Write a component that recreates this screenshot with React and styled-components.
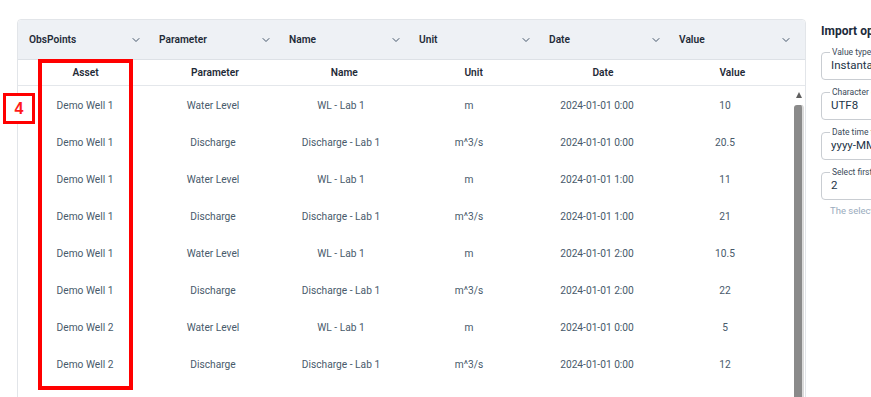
import React from "react";
import styled, { createGlobalStyle } from "styled-components";
import { ChevronDown } from "lucide-react";

const GlobalStyle = createGlobalStyle`
  html, body {
    margin: 0;
    padding: 0;
    overflow: hidden;
    background: #ffffff;
  }
  body {
    font-family: Roboto, "Liberation Sans", sans-serif;
  }
`;

const Page = styled.div`
  position: relative;
  display: flex;
  align-items: flex-start;
  gap: 15px;
  padding: 19px 0 0 17px;
  width: 1100px;
`;

const TableCard = styled.div`
  width: 787px;
  flex: none;
  border: 1px solid #e2e5e9;
  border-radius: 4px 4px 0 0;
  background: #ffffff;
`;

const FilterRow = styled.div`
  display: grid;
  grid-template-columns: repeat(6, 130px);
  height: 39px;
  background: #eef1f5;
  border-bottom: 1px solid #dde1e6;
  border-radius: 4px 4px 0 0;
`;

const FilterCell = styled.div`
  display: flex;
  align-items: center;
  justify-content: space-between;
  padding: 0 6px 0 11px;
  font-size: 10.2px;
  font-weight: 600;
  color: #1f2b38;
`;

const HeadRow = styled.div`
  display: grid;
  grid-template-columns: repeat(6, 1fr);
  height: 25px;
  padding: 0 8px 0 3px;
  border-bottom: 1px solid #e4e7eb;
`;

const HeadCell = styled.div`
  display: flex;
  align-items: center;
  justify-content: center;
  font-size: 10.2px;
  font-weight: 600;
  color: #1f2b38;
`;

const Body = styled.div`
  display: flex;
  height: 480px;
  overflow: hidden;
  padding: 1px 1px 0 3px;
`;

const Rows = styled.div`
  width: 768px;
  flex: none;
  margin-right: 5px;
`;

const ScrollBar = styled.div`
  width: 10px;
  flex: none;
  display: flex;
  flex-direction: column;
  align-items: center;
`;

const ScrollArrow = styled.div`
  height: 18px;
  width: 100%;
  display: flex;
  align-items: center;
  justify-content: center;

  &::before {
    content: "";
    border-left: 3.5px solid transparent;
    border-right: 3.5px solid transparent;
    border-bottom: 6px solid #5f5f5f;
    margin-top: -2px;
  }
`;

const ScrollThumb = styled.div`
  flex: 1;
  width: 8px;
  margin-left: -1px;
  background: #8a8a8a;
  border-right: 2px solid #dadada;
  border-radius: 3px 3px 0 0;
`;

const DataRow = styled.div`
  display: grid;
  grid-template-columns: repeat(6, 128px);
  height: 37px;
`;

const DataCell = styled.div`
  display: flex;
  align-items: center;
  justify-content: center;
  font-size: 10.2px;
  color: #485a6b;
  white-space: nowrap;
`;

const Panel = styled.div`
  width: 220px;
  flex: none;
  padding-top: 4px;
  display: flex;
  flex-direction: column;
  gap: 7px;
`;

const PanelTitle = styled.div`
  font-size: 12px;
  font-weight: 700;
  line-height: 16px;
  color: #1c2a3a;
  margin-bottom: 1px;
`;

const Field = styled.fieldset`
  margin: 0;
  padding: 0 9px 6px 9px;
  border: 1px solid #c9cdd2;
  border-radius: 4px;
  min-width: 0;
`;

const FieldLabel = styled.legend`
  padding: 0 2px;
  margin-left: -1px;
  font-size: 8.5px;
  line-height: 10px;
  color: #3b4a5a;
  white-space: nowrap;
`;

const FieldValue = styled.div`
  font-size: 11.5px;
  line-height: 16px;
  color: #233447;
  white-space: nowrap;
`;

const Helper = styled.div`
  margin-top: -3px;
  padding-left: 9px;
  font-size: 9.5px;
  line-height: 14px;
  color: #9aabbd;
  white-space: nowrap;
`;

const HighlightBox = styled.div`
  position: absolute;
  left: 38px;
  top: 59px;
  width: 95px;
  height: 331px;
  box-sizing: border-box;
  border: 4px solid #ff0000;
  pointer-events: none;
`;

const StepBadge = styled.div`
  position: absolute;
  left: 3px;
  top: 93px;
  width: 32px;
  height: 31px;
  box-sizing: border-box;
  border: 3.5px solid #ff0000;
  background: #ffffff;
  display: flex;
  align-items: center;
  justify-content: center;
  font-family: "Liberation Sans", Arial, sans-serif;
  font-size: 16px;
  font-weight: 700;
  color: #ff1a1a;
`;

const filters = ["ObsPoints", "Parameter", "Name", "Unit", "Date", "Value"];
const columns = ["Asset", "Parameter", "Name", "Unit", "Date", "Value"];

const rows = [
  ["Demo Well 1", "Water Level", "WL - Lab 1", "m", "2024-01-01 0:00", "10"],
  ["Demo Well 1", "Discharge", "Discharge - Lab 1", "m^3/s", "2024-01-01 0:00", "20.5"],
  ["Demo Well 1", "Water Level", "WL - Lab 1", "m", "2024-01-01 1:00", "11"],
  ["Demo Well 1", "Discharge", "Discharge - Lab 1", "m^3/s", "2024-01-01 1:00", "21"],
  ["Demo Well 1", "Water Level", "WL - Lab 1", "m", "2024-01-01 2:00", "10.5"],
  ["Demo Well 1", "Discharge", "Discharge - Lab 1", "m^3/s", "2024-01-01 2:00", "22"],
  ["Demo Well 2", "Water Level", "WL - Lab 1", "m", "2024-01-01 0:00", "5"],
  ["Demo Well 2", "Discharge", "Discharge - Lab 1", "m^3/s", "2024-01-01 0:00", "12"],
  ["Demo Well 2", "Water Level", "WL - Lab 1", "m", "2024-01-01 1:00", "6"],
  ["Demo Well 2", "Discharge", "Discharge - Lab 1", "m^3/s", "2024-01-01 1:00", "13"],
  ["Demo Well 2", "Water Level", "WL - Lab 1", "m", "2024-01-01 2:00", "5.5"],
  ["Demo Well 2", "Discharge", "Discharge - Lab 1", "m^3/s", "2024-01-01 2:00", "14"],
];

const fields = [
  { label: "Value type", value: "Instantaneous" },
  { label: "Character encoding", value: "UTF8" },
  { label: "Date time format", value: "yyyy-MM-dd HH:mm" },
  { label: "Select first data row", value: "2" },
];

export default function App() {
  return (
    <>
      <GlobalStyle />
      <Page>
        <TableCard>
          <FilterRow>
            {filters.map((f) => (
              <FilterCell key={f}>
                {f}
                <ChevronDown size={12} strokeWidth={2} color="#45566a" />
              </FilterCell>
            ))}
          </FilterRow>
          <HeadRow>
            {columns.map((c) => (
              <HeadCell key={c}>{c}</HeadCell>
            ))}
          </HeadRow>
          <Body>
            <Rows>
              {rows.map((r, i) => (
                <DataRow key={i}>
                  {r.map((v, j) => (
                    <DataCell key={j}>{v}</DataCell>
                  ))}
                </DataRow>
              ))}
            </Rows>
            <ScrollBar>
              <ScrollArrow />
              <ScrollThumb />
            </ScrollBar>
          </Body>
        </TableCard>
        <Panel>
          <PanelTitle>Import options</PanelTitle>
          {fields.map((f) => (
            <Field key={f.label}>
              <FieldLabel>{f.label}</FieldLabel>
              <FieldValue>{f.value}</FieldValue>
            </Field>
          ))}
          <Helper>The selected row is the first row of data</Helper>
        </Panel>
        <HighlightBox />
        <StepBadge>4</StepBadge>
      </Page>
    </>
  );
}
